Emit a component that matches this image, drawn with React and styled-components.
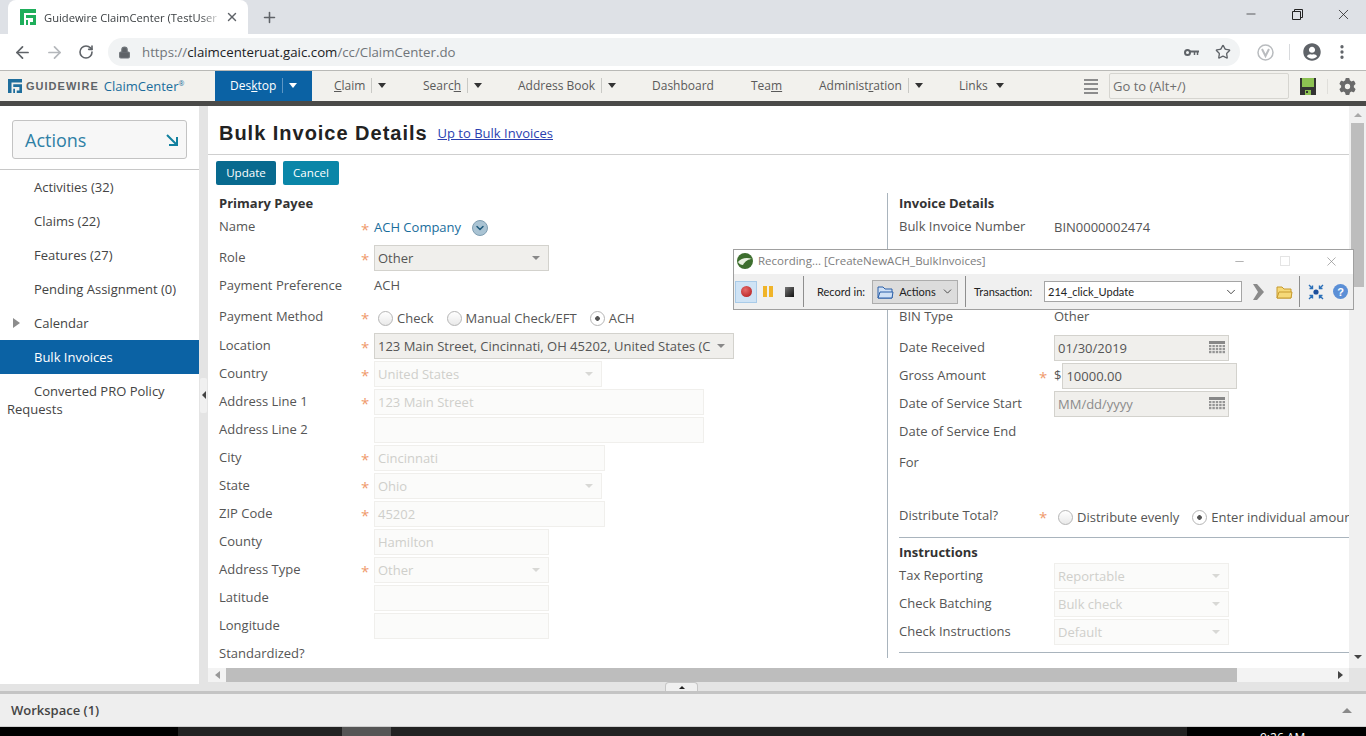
import styled, { createGlobalStyle } from "styled-components"
import {
  ArrowLeft,
  ArrowRight,
  RotateCw,
  Lock,
  Star,
  MoreVertical,
  Plus,
  X,
  Minus,
  ChevronDown,
} from "lucide-react"
import { FaUserCircle } from "react-icons/fa"
import { FaGear } from "react-icons/fa6"

const GlobalStyle = createGlobalStyle`
  html, body {
    margin: 0;
    padding: 0;
    height: 100%;
    overflow: hidden;
    background: #fff;
    font-family: "Open Sans", "Liberation Sans", sans-serif;
  }
  * { box-sizing: border-box; }
`

const Page = styled.div`
  width: 1366px;
  height: 736px;
  position: relative;
  overflow: hidden;
  display: flex;
  flex-direction: column;
`

/* browser chrome */
const TabStrip = styled.div`
  height: 34px;
  flex: none;
  background: #dee1e6;
  display: flex;
  padding-left: 8px;
  color: #3c4043;
`
const Tab = styled.div`
  width: 240px;
  height: 34px;
  background: #fff;
  border-radius: 8px 8px 0 0;
  display: flex;
  align-items: center;
  padding-left: 12px;
  font-size: 11.2px;
  margin-right: 13px;
`
const TabTitle = styled.span`
  width: 178px;
  margin: 0 3px 0 8px;
  white-space: nowrap;
  overflow: hidden;
  -webkit-mask-image: linear-gradient(90deg, #000 88%, transparent);
  mask-image: linear-gradient(90deg, #000 88%, transparent);
`
const PlusButton = styled.div`
  height: 34px;
  display: flex;
  align-items: center;
`
const WindowButtons = styled.div`
  margin-left: auto;
  height: 28px;
  display: flex;
  align-items: center;
`
const WindowButton = styled.div`
  width: 46px;
  height: 28px;
  display: flex;
  align-items: center;
  justify-content: center;
`
const UrlBar = styled.div`
  height: 36px;
  flex: none;
  background: #fff;
  display: flex;
  align-items: center;
  padding-left: 6px;
  color: #5f6368;
`
const NavIcon = styled.div`
  width: 32px;
  display: flex;
  justify-content: center;
  color: ${({ $faded }) => ($faded ? "#b4b7bb" : "#5f6368")};
`
const Omnibox = styled.div`
  width: 1132px;
  height: 28px;
  margin-left: 6px;
  border-radius: 14px;
  background: #f1f3f4;
  display: flex;
  align-items: center;
  padding-left: 10px;
  font-size: 13.25px;
  color: #70757a;
`
const UrlText = styled.span`
  margin-left: 11px;
`
const UrlHost = styled.span`
  color: #202124;
`
const OmniIcons = styled.div`
  margin-left: auto;
  display: flex;
  align-items: center;
  gap: 16px;
  padding-right: 9px;
  color: #5f6368;
`
const UrlExtras = styled.div`
  display: flex;
  align-items: center;
  padding-left: 17px;
  color: #5f6368;
`
const Divider = styled.span`
  width: 1px;
  height: 16px;
  background: #d8dadd;
  margin: 0 13px 0 15px;
`
const Dots = styled(MoreVertical)`
  margin-left: 12px;
`

/* application nav */
const AppBar = styled.div`
  height: 31px;
  flex: none;
  background: #f2f1ed;
  border-top: 1px solid #b9b9b6;
  display: flex;
  align-items: stretch;
  color: #5a5a5a;
  font-size: 12px;
`
const Brand = styled.div`
  width: 215px;
  flex: none;
  display: flex;
  align-items: center;
  padding: 0 0 1px 8px;
`
const BrandWord = styled.span`
  font-family: "Liberation Sans", sans-serif;
  font-weight: 700;
  font-size: 11px;
  letter-spacing: 1.02px;
  color: #5f6468;
  margin-left: 4px;
`
const BrandApp = styled.span`
  color: #1a6d9c;
  font-size: 13px;
  margin-left: 5px;
  white-space: nowrap;
`
const BrandMark = styled.sup`
  font-size: 7px;
  line-height: 0;
`
const NavTab = styled.div`
  display: flex;
  align-items: center;
  width: ${({ $w }) => $w}px;
  padding: 0 0 2px ${({ $pad }) => $pad}px;
  white-space: nowrap;
  background: ${({ $active }) => ($active ? "#0b62a4" : "transparent")};
  color: ${({ $active }) => ($active ? "#fff" : "#5a5a5a")};
  flex: none;
`
const NavSep = styled.span`
  width: 1px;
  height: 15px;
  margin: 0 6px;
  background: ${({ $active }) => ($active ? "#5d96c4" : "#c9c9c5")};
`
const Caret = styled.span`
  width: 0;
  height: 0;
  border-left: 4px solid transparent;
  border-right: 4px solid transparent;
  border-top: 5px solid ${({ $color }) => $color || "#333"};
  display: inline-block;
  margin-left: ${({ $gap }) => $gap || 0}px;
  margin-top: 1px;
`
const NavTools = styled.div`
  margin-left: auto;
  display: flex;
  align-items: center;
  padding-right: 10px;
`
const GoTo = styled.div`
  width: 180px;
  height: 26px;
  border: 1px solid #d6d5d0;
  border-radius: 2px;
  color: #6e6e6e;
  font-size: 13px;
  display: flex;
  align-items: center;
  padding-left: 3px;
  margin: 0 11px;
`
const Burger = styled.div`
  width: 14px;
  height: 15px;
  background: repeating-linear-gradient(#8c8c8c 0 2px, transparent 2px 4.3px);
`
const ToolSep = styled.span`
  width: 1px;
  height: 15px;
  background: #e0dfdb;
  margin: 0 11px 0 11px;
`
const DarkRule = styled.div`
  height: 5px;
  flex: none;
  background: #4a4a48;
`

/* body */
const Body = styled.div`
  flex: 1;
  min-height: 0;
  display: flex;
  background: #e4e4e4;
`
const Sidebar = styled.div`
  width: 199px;
  flex: none;
  background: #fff;
  height: 578px;
`
const ActionsWrap = styled.div`
  height: 64px;
  padding: 14px 12px 0;
  border-bottom: 1px solid #c8c8c8;
`
const ActionsButton = styled.div`
  height: 39px;
  border: 1px solid #c3c3c3;
  border-radius: 3px;
  background: #f7f7f7;
  display: flex;
  align-items: center;
  justify-content: space-between;
  padding: 0 8px 0 12px;
  font-size: 18px;
  color: #2e80a5;
`
const SideItem = styled.div`
  min-height: 34px;
  padding: 8px 8px 0 ${({ $wrap }) => ($wrap ? "7px" : "34px")};
  text-indent: ${({ $wrap }) => ($wrap ? "27px" : "0")};
  font-size: 13px;
  line-height: 18px;
  color: ${({ $active }) => ($active ? "#fff" : "#444")};
  background: ${({ $active }) => ($active ? "#0b62a4" : "transparent")};
  position: relative;
`
const SideArrow = styled.span`
  position: absolute;
  left: 13px;
  top: 12px;
  width: 0;
  height: 0;
  border-top: 5px solid transparent;
  border-bottom: 5px solid transparent;
  border-left: 7px solid #8c8c8c;
`
const Splitter = styled.div`
  width: 9px;
  flex: none;
  display: flex;
  align-items: center;
  justify-content: center;
  height: 578px;
`
const SplitPill = styled.div`
  width: 7px;
  height: 35px;
  background: #f0f0f0;
  border-radius: 2px;
  display: flex;
  align-items: center;
  justify-content: center;
`
const SplitCaret = styled.span`
  width: 0;
  height: 0;
  border-top: 4px solid transparent;
  border-bottom: 4px solid transparent;
  border-right: 4px solid #444;
`
const Main = styled.div`
  flex: 1;
  min-width: 0;
  display: flex;
  flex-direction: column;
`
const MainRow = styled.div`
  display: flex;
  height: 562px;
  flex: none;
`
const Content = styled.div`
  width: 1141px;
  flex: none;
  background: #fff;
  overflow: hidden;
`
const TitleRow = styled.div`
  height: 49px;
  padding: 15px 0 0 11px;
  border-bottom: 1px solid #cfcfcf;
  display: flex;
  align-items: flex-start;
`
const Title = styled.h1`
  margin: 0;
  font-family: "Liberation Sans", sans-serif;
  font-size: 20px;
  line-height: 24px;
  font-weight: 700;
  letter-spacing: 0.98px;
  color: #222;
`
const UpLink = styled.a`
  margin-left: 10px;
  font-size: 13px;
  line-height: 24px;
  color: #2a3fb0;
  text-decoration: underline;
`
const Buttons = styled.div`
  display: flex;
  gap: 7px;
  padding: 6px 0 0 8px;
  height: 38px;
`
const Btn = styled.div`
  height: 24px;
  width: ${({ $w }) => $w}px;
  padding-bottom: 1px;
  background: ${({ $dark }) => ($dark ? "#086a8f" : "#0a86a8")};
  border-radius: 2px;
  color: #fff;
  font-size: 11.6px;
  display: flex;
  align-items: center;
  justify-content: center;
`
const Columns = styled.div`
  display: flex;
`
const LeftCol = styled.div`
  width: 679px;
  flex: none;
  padding-left: 11px;
  height: 475px;
  overflow: hidden;
`
const RightCol = styled.div`
  flex: 1;
  min-width: 0;
  height: 465px;
  border-left: 1px solid #a9b4bd;
  padding-left: 11px;
  overflow: hidden;
`
const Heading = styled.div`
  font-size: 13px;
  font-weight: 700;
  color: #333;
  height: ${({ $h }) => $h || 20}px;
  line-height: 18px;
  padding-top: 1px;
  white-space: nowrap;
`
const Row = styled.div`
  display: flex;
  align-items: center;
  height: ${({ $h }) => $h || 28}px;
  padding-top: ${({ $pt }) => $pt || 0}px;
  padding-bottom: ${({ $pb }) => $pb || 0}px;
  white-space: nowrap;
`
const Label = styled.div`
  width: ${({ $right }) => ($right ? 140 : 142)}px;
  flex: none;
  font-size: 13px;
  color: #555;
  margin-top: ${({ $lift }) => ($lift ? -2 : -1)}px;
`
const Req = styled.div`
  width: ${({ $right }) => ($right ? 15 : 13)}px;
  flex: none;
  color: #ef9a6c;
  font-size: 15px;
  line-height: 14px;
  margin-top: 3px;
`
const Value = styled.div`
  font-size: 13px;
  color: ${({ $link }) => ($link ? "#1a6d9c" : "#555")};
`
const Field = styled.div`
  width: ${({ $w }) => $w}px;
  height: 26px;
  margin-top: 2px;
  border: 1px solid ${({ $off }) => ($off ? "#f0efec" : "#d3d2cd")};
  background: ${({ $off }) => ($off ? "#fbfbfa" : "#f0efec")};
  color: ${({ $off, $hint }) => ($off ? "#cfcfcb" : $hint ? "#8b8b8b" : "#555")};
  font-size: 13px;
  display: flex;
  align-items: center;
  justify-content: space-between;
  padding: 0 ${({ $select }) => ($select ? 8 : 3)}px 0 3px;
  overflow: hidden;
  white-space: nowrap;
`
const SelectCaret = styled.span`
  width: 0;
  height: 0;
  flex: none;
  margin-left: 4px;
  border-left: 4px solid transparent;
  border-right: 4px solid transparent;
  border-top: 4px solid ${({ $off }) => ($off ? "#d8d8d5" : "#888")};
`
const Radio = styled.span`
  width: 15px;
  height: 15px;
  flex: none;
  border-radius: 50%;
  border: 1px solid #b5b5b5;
  background: ${({ $on }) =>
    $on
      ? "radial-gradient(circle, #555 0 2px, #fff 2.6px)"
      : "linear-gradient(#fff, #e9e9e9)"};
  margin-right: 4px;
`
const RadioLabel = styled.span`
  font-size: 13px;
  color: #555;
  margin-right: ${({ $gap }) => $gap || 0}px;
`
const RadioGroup = styled.div`
  display: flex;
  align-items: center;
  margin: 3px 0 0 4px;
`
const SectionRule = styled.div`
  height: 1px;
  background: #a9b4bd;
  margin: ${({ $m }) => $m};
`
const Dollar = styled.span`
  font-size: 13px;
  color: #555;
  margin-right: 1px;
`
const MenuDot = styled.span`
  width: 16px;
  height: 16px;
  border-radius: 50%;
  background: #a9c3d3;
  border: 1px solid #7f9eb2;
  margin: 1px 0 0 11px;
  display: flex;
  align-items: center;
  justify-content: center;
  color: #1f5a7c;
`

/* scrollbars */
const VScroll = styled.div`
  flex: 1;
  background: #f0f0f0;
  position: relative;
  display: flex;
  flex-direction: column;
  padding: 17px 2px 0;
`
const VThumb = styled.div`
  height: 164px;
  background: #bdbdbd;
`
const VArrow = styled.span`
  position: absolute;
  right: 4px;
  width: 0;
  height: 0;
  border-left: 4px solid transparent;
  border-right: 4px solid transparent;
  ${({ $up }) =>
    $up
      ? "top: 7px; border-bottom: 4px solid #a8a8a8;"
      : "bottom: 9px; border-top: 4px solid #444;"}
`
const HScroll = styled.div`
  height: 14px;
  width: 1141px;
  flex: none;
  display: flex;
  align-items: stretch;
  background: #f3f3f3;
`
const HEnd = styled.div`
  width: 18px;
  flex: none;
  display: flex;
  align-items: center;
  justify-content: center;
  margin-left: ${({ $end }) => ($end ? "auto" : "0")};
`
const HThumb = styled.div`
  width: 1011px;
  flex: none;
  background: #bdbdbd;
`
const HArrow = styled.span`
  width: 0;
  height: 0;
  border-top: 4px solid transparent;
  border-bottom: 4px solid transparent;
  ${({ $right }) =>
    $right ? "border-left: 5px solid #444;" : "border-right: 5px solid #999;"}
`
const SplitTab = styled.div`
  height: 9px;
  width: 33px;
  margin-left: 457px;
  border: 1px solid #c6c6c6;
  border-bottom: 0;
  border-radius: 4px 4px 0 0;
  background: #f0f0f0;
  display: flex;
  align-items: center;
  justify-content: center;
`
const SplitUp = styled.span`
  width: 0;
  height: 0;
  border-left: 3px solid transparent;
  border-right: 3px solid transparent;
  border-bottom: 3px solid #222;
`

/* workspace + taskbar */
const Workspace = styled.div`
  position: absolute;
  left: 0;
  right: 0;
  top: 691px;
  height: 36px;
  background: #eeeeee;
  border-top: 3px solid #c4c4c4;
  border-bottom: 1px solid #cfcfcf;
  display: flex;
  align-items: center;
  justify-content: space-between;
  padding: 0 14px 0 11px;
  font-size: 13px;
  font-weight: 600;
  color: #444;
`
const WsCaret = styled.span`
  width: 0;
  height: 0;
  border-left: 5px solid transparent;
  border-right: 5px solid transparent;
  border-bottom: 5px solid #8a8a8a;
`
const Taskbar = styled.div`
  position: absolute;
  left: 0;
  right: 0;
  top: 727px;
  height: 9px;
  background: #000;
  display: flex;
  overflow: hidden;
`
const TaskSlot = styled.div`
  width: ${({ $w }) => $w}px;
  flex: ${({ $w }) => ($w ? "none" : "1")};
  background: ${({ $c }) => $c};
  color: #fff;
  font-size: 12px;
  padding: ${({ $text }) => ($text ? "4px 0 0 73px" : "0")};
  line-height: 14px;
  white-space: nowrap;
`

/* recorder window that floats over the page */
const Recorder = styled.div`
  position: absolute;
  left: 733px;
  top: 249px;
  width: 621px;
  height: 61px;
  border: 1px solid #a0a0a0;
  background: #f0f0f0;
  z-index: 5;
`
const RecTitle = styled.div`
  height: 24px;
  background: #fff;
  display: flex;
  align-items: center;
  padding: 0 0 2px 3px;
  font-size: 11.5px;
  color: #7d7d7d;
`
const RecTitleText = styled.span`
  margin: -1px 0 0 5px;
`
const RecWinButtons = styled.div`
  margin-left: auto;
  display: flex;
  align-items: center;
  gap: 34px;
  padding-right: 14px;
  color: #8a8a8a;
`
const RecMaxBox = styled.span`
  width: 10px;
  height: 10px;
  border: 1px solid #e4e4e4;
`
const RecBar = styled.div`
  height: 35px;
  display: flex;
  align-items: center;
  padding-left: 1px;
  font-family: "Lato", "Open Sans", sans-serif;
  font-size: 11px;
  color: #222;
`
const RecordBtn = styled.div`
  width: 22px;
  height: 22px;
  background: #cfe3f5;
  border: 1px solid #a9cbe8;
  display: flex;
  align-items: center;
  justify-content: center;
`
const RedDot = styled.span`
  width: 11px;
  height: 11px;
  border-radius: 50%;
  background: radial-gradient(circle at 40% 35%, #e56a6a, #b01616);
`
const PauseBars = styled.span`
  width: 10px;
  height: 11px;
  margin-left: 6px;
  background: linear-gradient(90deg, #f0b429 0 4px, transparent 4px 6px, #f0b429 6px);
`
const StopBox = styled.span`
  width: 9px;
  height: 10px;
  margin-left: 12px;
  background: linear-gradient(135deg, #777, #111);
`
const RecSep = styled.span`
  width: 1px;
  height: 31px;
  flex: none;
  background: #8e8e8e;
  margin: ${({ $m }) => $m};
`
const RecLabel = styled.span`
  width: ${({ $w }) => $w}px;
  flex: none;
  white-space: nowrap;
`
const ActionsCombo = styled.div`
  width: 86px;
  height: 24px;
  flex: none;
  margin-left: 6px;
  background: #dcdcdc;
  border: 1px solid #adadad;
  display: flex;
  align-items: center;
  justify-content: space-between;
  padding: 0 3px 0 4px;
`
const TxnCombo = styled.div`
  width: 198px;
  height: 21px;
  flex: none;
  margin-left: 11px;
  background: #fff;
  border: 1px solid #a5a5a5;
  display: flex;
  align-items: center;
  justify-content: space-between;
  padding: 0 3px 0 3px;
  color: #222;
`
const Gap = styled.span`
  width: ${({ $w }) => $w}px;
  flex: none;
`

const Logo = ({ color, size = 14 }) => (
  <svg width={size} height={size} viewBox="0 0 16 16">
    <path fill={color} d="M0 0h16v4H4v12H0zM6 6h10v10H10v-3h3V9H6z" />
    <path fill={color} d="M6 11h2v5H6z" />
  </svg>
)

const Disk = () => (
  <svg width="16" height="17" viewBox="0 0 16 17">
    <path fill="#333" d="M0 0h16v17H0z" />
    <path fill="#8cc152" d="M2 0h12v9H2z" />
    <path fill="#8cc152" d="M5 12h6v5H5z" />
    <path fill="#333" d="M6 13h2v2H6z" />
  </svg>
)

const Calendar = () => (
  <svg width="16" height="14" viewBox="0 0 16 14">
    <path fill="#888" d="M0 0h16v3H0z" />
    {[4, 7, 10].map((y) =>
      [0, 3.4, 6.8, 10.2, 13.6].map((x) => (
        <rect key={`${x}-${y}`} x={x} y={y} width="2.4" height="2.2" fill="#959595" />
      ))
    )}
  </svg>
)

const CornerArrow = () => (
  <svg width="12" height="12" viewBox="0 0 12 12" fill="none" stroke="#12809f" strokeWidth="2">
    <path d="M1 1l9 9M11 3v8H3" />
  </svg>
)

const RestoreIcon = () => (
  <svg width="11" height="11" viewBox="0 0 11 11" fill="none" stroke="#222" strokeWidth="1">
    <path d="M.5 2.5h8v8h-8zM2.5 2.5v-2h8v8h-2" />
  </svg>
)

const PasswordKey = () => (
  <svg width="15" height="9" viewBox="0 0 15 9" fill="none" stroke="#5f6368">
    <circle cx="3.500" cy="4.500" r="2.500" strokeWidth="2" />
    <path d="M6 3.500h9" strokeWidth="2" />
    <path d="M10.500 4v3M13.500 4v3" strokeWidth="1.500" />
  </svg>
)

const VIcon = () => (
  <svg width="17" height="17" viewBox="0 0 17 17" fill="none" stroke="#b9bcbf">
    <circle cx="8.5" cy="8.5" r="7.5" strokeWidth="1.5" />
    <path d="M5 5l3.5 7L12 5" strokeWidth="2" />
  </svg>
)

const RecLogo = () => (
  <svg width="16" height="16" viewBox="0 0 16 16">
    <circle cx="8" cy="8" r="8" fill="#3d6e2e" />
    <path d="M1 9c3-4 9-5 14-3-3 0-7 2-9 6-2 0-4-1-5-3z" fill="#e9f1e2" />
  </svg>
)

const Folder = ({ fill, stroke }) => (
  <svg width="17" height="14" viewBox="0 0 17 14">
    <path d="M1 2h5l2 2h7v9H1z" fill={fill} stroke={stroke} />
    <path d="M1 13l2-6h13l-1 6z" fill={fill} stroke={stroke} />
  </svg>
)

const Play = () => (
  <svg width="11" height="16" viewBox="0 0 11 16">
    <path fill="#8a8a8a" d="M0 0h4l7 8-7 8H0l5-8z" />
  </svg>
)

const Capture = () => (
  <svg width="16" height="16" viewBox="0 0 16 16" fill="none" stroke="#2a6fb8" strokeWidth="1.4">
    <circle cx="8" cy="8" r="2.6" fill="#1c4f9c" stroke="none" />
    <path d="M1 1l3.5 3.5M4.5 1.5v3h-3M15 1l-3.500 3.500M11.500 1.500v3h3M1 15l3.500-3.500M1.500 11.500h3v3M15 15l-3.500-3.500M14.500 11.500h-3v3" />
  </svg>
)

const Help = () => (
  <svg width="15" height="15" viewBox="0 0 15 15">
    <circle cx="7.5" cy="7.5" r="7.500" fill="#5b8fd6" />
    <text x="7.5" y="11.500" textAnchor="middle" fontSize="11" fontWeight="700" fill="#fff" fontFamily="Liberation Sans">?</text>
  </svg>
)

const navTabs = [
  { label: "Claim", w: 95, pad: 22, caret: true, under: 0 },
  { label: "Search", w: 95, pad: 16, caret: true, under: 5 },
  { label: "Address Book", w: 134, pad: 16, caret: true },
  { label: "Dashboard", w: 99, pad: 16 },
  { label: "Team", w: 68, pad: 16, under: 3 },
  { label: "Administration", w: 140, pad: 16, caret: true, under: 8 },
  { label: "Links", w: 90, pad: 16, caret: true, plain: true },
]

const Underlined = ({ text, at }) =>
  at === undefined ? (
    text
  ) : (
    <span>
      {text.slice(0, at)}
      <u>{text[at]}</u>
      {text.slice(at + 1)}
    </span>
  )

const sideItems = ["Activities (32)", "Claims (22)", "Features (27)", "Pending Assignment (0)"]

const leftRows = [
  { label: "Country", req: true, w: 228, text: "United States", select: true },
  { label: "Address Line 1", req: true, w: 330, text: "123 Main Street" },
  { label: "Address Line 2", w: 330, text: "" },
  { label: "City", req: true, w: 231, text: "Cincinnati" },
  { label: "State", req: true, w: 228, text: "Ohio", select: true },
  { label: "ZIP Code", req: true, w: 231, text: "45202" },
  { label: "County", w: 175, text: "Hamilton" },
  { label: "Address Type", req: true, w: 175, text: "Other", select: true },
  { label: "Latitude", w: 175, text: "" },
  { label: "Longitude", w: 175, text: "" },
]

const instructionRows = [
  { label: "Tax Reporting", text: "Reportable" },
  { label: "Check Batching", text: "Bulk check" },
  { label: "Check Instructions", text: "Default" },
]

export default function App() {
  return (
    <Page>
      <GlobalStyle />
      <TabStrip>
        <Tab>
          <Logo color="#1fae5b" size={16} />
          <TabTitle>Guidewire ClaimCenter (TestUser</TabTitle>
          <X size={14} strokeWidth={2.4} color="#5f6368" />
        </Tab>
        <PlusButton>
          <Plus size={17} strokeWidth={2.2} color="#5f6368" />
        </PlusButton>
        <WindowButtons>
          <WindowButton>
            <Minus size={14} strokeWidth={1.2} color="#222" />
          </WindowButton>
          <WindowButton>
            <RestoreIcon />
          </WindowButton>
          <WindowButton>
            <X size={17} strokeWidth={1.1} color="#222" />
          </WindowButton>
        </WindowButtons>
      </TabStrip>
      <UrlBar>
        <NavIcon>
          <ArrowLeft size={19} strokeWidth={2.2} />
        </NavIcon>
        <NavIcon $faded>
          <ArrowRight size={19} strokeWidth={2.2} />
        </NavIcon>
        <NavIcon>
          <RotateCw size={16} strokeWidth={2.4} />
        </NavIcon>
        <Omnibox>
          <Lock size={13} fill="#5f6368" strokeWidth={2} />
          <UrlText>
            https://<UrlHost>claimcenteruat.gaic.com</UrlHost>/cc/ClaimCenter.do
          </UrlText>
          <OmniIcons>
            <PasswordKey />
            <Star size={16} strokeWidth={2} />
          </OmniIcons>
        </Omnibox>
        <UrlExtras>
          <VIcon />
          <Divider />
          <FaUserCircle size={18} />
          <Dots size={18} strokeWidth={2.4} />
        </UrlExtras>
      </UrlBar>

      <AppBar>
        <Brand>
          <Logo color="#1f6e9c" size={14} />
          <BrandWord>GUIDEWIRE</BrandWord>
          <BrandApp>
            ClaimCenter<BrandMark>®</BrandMark>
          </BrandApp>
        </Brand>
        <NavTab $active $w={97} $pad={15}>
          <Underlined text="Desktop" at={3} />
          <NavSep $active />
          <Caret $color="#fff" />
        </NavTab>
        {navTabs.map((t) => (
          <NavTab key={t.label} $w={t.w} $pad={t.pad}>
            <Underlined text={t.label} at={t.under} />
            {t.caret && !t.plain && <NavSep />}
            {t.caret && <Caret $gap={t.plain ? 8 : 0} />}
          </NavTab>
        ))}
        <NavTools>
          <Burger />
          <GoTo>Go to (Alt+/)</GoTo>
          <Disk />
          <ToolSep />
          <FaGear size={17} color="#6a6a6a" />
        </NavTools>
      </AppBar>
      <DarkRule />

      <Body>
        <Sidebar>
          <ActionsWrap>
            <ActionsButton>
              Actions
              <CornerArrow />
            </ActionsButton>
          </ActionsWrap>
          {sideItems.map((item) => (
            <SideItem key={item}>{item}</SideItem>
          ))}
          <SideItem>
            <SideArrow />
            Calendar
          </SideItem>
          <SideItem $active>Bulk Invoices</SideItem>
          <SideItem $wrap>Converted PRO Policy Requests</SideItem>
        </Sidebar>
        <Splitter>
          <SplitPill>
            <SplitCaret />
          </SplitPill>
        </Splitter>
        <Main>
          <MainRow>
            <Content>
              <TitleRow>
                <Title>Bulk Invoice Details</Title>
                <UpLink>Up to Bulk Invoices</UpLink>
              </TitleRow>
              <Buttons>
                <Btn $dark $w={60}>Update</Btn>
                <Btn $w={56}>Cancel</Btn>
              </Buttons>
              <Columns>
                <LeftCol>
                  <Heading>Primary Payee</Heading>
                  <Row>
                    <Label $lift>Name</Label>
                    <Req>*</Req>
                    <Value $link>ACH Company</Value>
                    <MenuDot>
                      <ChevronDown size={12} strokeWidth={3} />
                    </MenuDot>
                  </Row>
                  <Row $h={32}>
                    <Label>Role</Label>
                    <Req>*</Req>
                    <Field $w={175} $select>
                      Other
                      <SelectCaret />
                    </Field>
                  </Row>
                  <Row $h={24}>
                    <Label>Payment Preference</Label>
                    <Req />
                    <Value>ACH</Value>
                  </Row>
                  <Row $h={34} $pt={5}>
                    <Label>Payment Method</Label>
                    <Req>*</Req>
                    <RadioGroup>
                      <Radio />
                      <RadioLabel $gap={13}>Check</RadioLabel>
                      <Radio />
                      <RadioLabel $gap={13}>Manual Check/EFT</RadioLabel>
                      <Radio $on />
                      <RadioLabel>ACH</RadioLabel>
                    </RadioGroup>
                  </Row>
                  <Row>
                    <Label>Location</Label>
                    <Req>*</Req>
                    <Field $w={360} $select>
                      123 Main Street, Cincinnati, OH 45202, United States (C
                      <SelectCaret />
                    </Field>
                  </Row>
                  {leftRows.map((r) => (
                    <Row key={r.label}>
                      <Label>{r.label}</Label>
                      <Req>{r.req ? "*" : ""}</Req>
                      <Field $off $w={r.w} $select={r.select}>
                        {r.text}
                        {r.select && <SelectCaret $off />}
                      </Field>
                    </Row>
                  ))}
                  <Row>
                    <Label>Standardized?</Label>
                  </Row>
                </LeftCol>
                <RightCol>
                  <Heading>Invoice Details</Heading>
                  <Row $pb={1}>
                    <Label $right>Bulk Invoice Number</Label>
                    <Req $right />
                    <Value>BIN0000002474</Value>
                  </Row>
                  <Row $h={61} />
                  <Row $h={31} $pb={3}>
                    <Label $right>BIN Type</Label>
                    <Req $right />
                    <Value>Other</Value>
                  </Row>
                  <Row>
                    <Label $right>Date Received</Label>
                    <Req $right />
                    <Field $w={175}>
                      01/30/2019
                      <Calendar />
                    </Field>
                  </Row>
                  <Row>
                    <Label $right>Gross Amount</Label>
                    <Req $right>*</Req>
                    <Dollar>$</Dollar>
                    <Field $w={175}>10000.00</Field>
                  </Row>
                  <Row>
                    <Label $right>Date of Service Start</Label>
                    <Req $right />
                    <Field $w={175} $hint>
                      MM/dd/yyyy
                      <Calendar />
                    </Field>
                  </Row>
                  <Row>
                    <Label $right>Date of Service End</Label>
                  </Row>
                  <Row $h={34}>
                    <Label $right>For</Label>
                  </Row>
                  <Row $h={58} $pt={15}>
                    <Label $right>Distribute Total?</Label>
                    <Req $right>*</Req>
                    <RadioGroup>
                      <Radio />
                      <RadioLabel $gap={13}>Distribute evenly</RadioLabel>
                      <Radio $on />
                      <RadioLabel>Enter individual amounts</RadioLabel>
                    </RadioGroup>
                  </Row>
                  <SectionRule $m="0 0 4px" />
                  <Heading $h={19}>Instructions</Heading>
                  {instructionRows.map((r) => (
                    <Row key={r.label}>
                      <Label $right>{r.label}</Label>
                      <Req $right />
                      <Field $off $w={175} $select>
                        {r.text}
                        <SelectCaret $off />
                      </Field>
                    </Row>
                  ))}
                  <SectionRule $m="7px 0 0" />
                </RightCol>
              </Columns>
            </Content>
            <VScroll>
              <VArrow $up />
              <VThumb />
              <VArrow />
            </VScroll>
          </MainRow>
          <HScroll>
            <HEnd>
              <HArrow />
            </HEnd>
            <HThumb />
            <HEnd $end>
              <HArrow $right />
            </HEnd>
          </HScroll>
          <SplitTab>
            <SplitUp />
          </SplitTab>
        </Main>
      </Body>

      <Workspace>
        Workspace (1)
        <WsCaret />
      </Workspace>
      <Taskbar>
        <TaskSlot $w={178} $c="#000" />
        <TaskSlot $w={164} $c="#222" />
        <TaskSlot $w={49} $c="#555" />
        <TaskSlot $w={796} $c="#222" />
        <TaskSlot $c="#000" $text>9:26 AM</TaskSlot>
      </Taskbar>

      <Recorder>
        <RecTitle>
          <RecLogo />
          <RecTitleText>Recording... [CreateNewACH_BulkInvoices]</RecTitleText>
          <RecWinButtons>
            <Minus size={13} strokeWidth={1.2} />
            <RecMaxBox />
            <X size={15} strokeWidth={1.1} />
          </RecWinButtons>
        </RecTitle>
        <RecBar>
          <RecordBtn>
            <RedDot />
          </RecordBtn>
          <PauseBars />
          <StopBox />
          <RecSep $m="0 13px 0 9px" />
          <RecLabel $w={49}>Record in:</RecLabel>
          <ActionsCombo>
            <Folder fill="#cfe0f5" stroke="#2a5fa8" />
            Actions
            <ChevronDown size={13} strokeWidth={1.4} />
          </ActionsCombo>
          <RecSep $m="0 8px 0 7px" />
          <RecLabel $w={59}>Transaction:</RecLabel>
          <TxnCombo>
            214_click_Update
            <ChevronDown size={14} strokeWidth={1.4} />
          </TxnCombo>
          <Gap $w={11} />
          <Play />
          <Gap $w={12} />
          <Folder fill="#f6d978" stroke="#c69a2e" />
          <RecSep $m="0 8px 0 6px" />
          <Capture />
          <Gap $w={9} />
          <Help />
        </RecBar>
      </Recorder>
    </Page>
  )
}
